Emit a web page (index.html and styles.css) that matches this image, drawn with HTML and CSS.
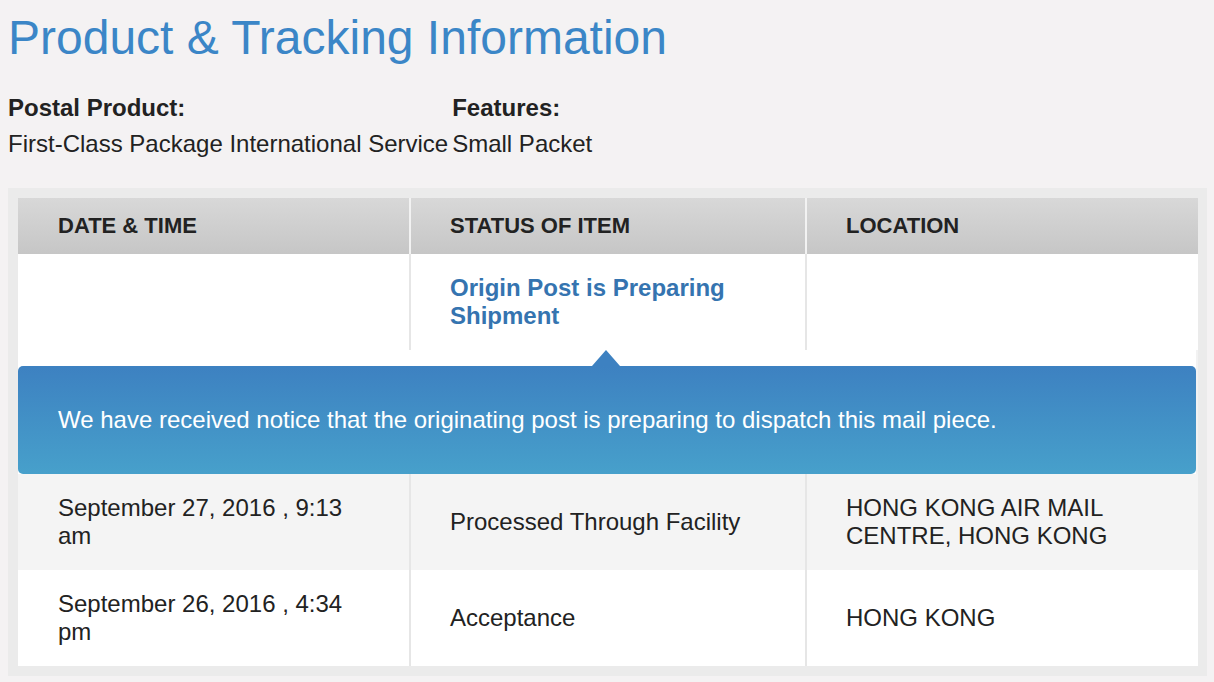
FILE: index.html
```html
<!DOCTYPE html>
<html lang="en">
<head>
<meta charset="utf-8">
<title>Product &amp; Tracking Information</title>
<link rel="stylesheet" href="styles.css">
</head>
<body>
<h1 class="title">Product &amp; Tracking Information</h1>
<div class="product">
  <div class="product-col">
    <div class="label">Postal Product:</div>
    <div class="value">First-Class Package International Service</div>
  </div>
  <div class="product-col">
    <div class="label">Features:</div>
    <div class="value">Small Packet</div>
  </div>
</div>
<div class="track-box">
  <div class="track-table">
    <div class="row row--head">
      <div class="cell">DATE &amp; TIME</div>
      <div class="cell">STATUS OF ITEM</div>
      <div class="cell">LOCATION</div>
    </div>
    <div class="row row--white">
      <div class="cell"></div>
      <div class="cell status-link">Origin Post is Preparing Shipment</div>
      <div class="cell"></div>
    </div>
    <div class="detail-row">
      <div class="detail">
        <span class="detail-arrow"></span>
        We have received notice that the originating post is preparing to dispatch this mail piece.
      </div>
    </div>
    <div class="row row--gray">
      <div class="cell">September 27, 2016 , 9:13 am</div>
      <div class="cell">Processed Through Facility</div>
      <div class="cell">HONG KONG AIR MAIL CENTRE, HONG KONG</div>
    </div>
    <div class="row row--white">
      <div class="cell">September 26, 2016 , 4:34 pm</div>
      <div class="cell">Acceptance</div>
      <div class="cell">HONG KONG</div>
    </div>
  </div>
</div>
</body>
</html>
```

FILE: styles.css
```css
html, body {
  margin: 0;
  padding: 0;
}
body {
  background: #f4f2f3;
  font-family: "Liberation Sans", Arial, Helvetica, sans-serif;
  color: #222;
  padding: 8px;
}
.title {
  margin: 0;
  font-weight: normal;
  font-size: 48px;
  line-height: 60px;
  color: #3b86c7;
}
.product {
  display: flex;
  gap: 4px;
  margin-top: 22px;
}
.product-col {
  display: flex;
  flex-direction: column;
}
.label {
  font-weight: bold;
  font-size: 24px;
  line-height: 36px;
}
.value {
  font-size: 24px;
  line-height: 36px;
  white-space: nowrap;
}
.track-box {
  margin-top: 26px;
  background: #ebebeb;
  padding: 10px 9px 10px 10px;
  width: 1199px;
  box-sizing: border-box;
}
.track-table {
  display: flex;
  flex-direction: column;
}
.row {
  display: grid;
  grid-template-columns: 391px 396px 393px;
}
.cell {
  padding: 0 40px;
  font-size: 24px;
  line-height: 28px;
  min-height: 96px;
  display: flex;
  align-items: center;
}
.row .cell + .cell {
  border-left: 2px solid #e6e6e6;
  padding-left: 39px;
}
.row--head {
  background: linear-gradient(#d8d8d8, #c6c6c6);
}
.row--head .cell {
  min-height: 56px;
  font-size: 22px;
  font-weight: bold;
  color: #222;
}
.row--head .cell + .cell {
  border-left-color: #f2f2f2;
}
.row--white {
  background: #fff;
}
.row--gray {
  background: #f4f4f4;
}
.status-link {
  color: #3574b0;
  font-weight: bold;
}
.detail-row {
  background: #fff;
  padding-top: 16px;
  padding-right: 2px;
  box-shadow: inset -2px 0 0 #f2f2f2;
}
.detail {
  position: relative;
  background: linear-gradient(#3d81c1, #47a0cb);
  border-radius: 5px;
  color: #fff;
  font-size: 24px;
  line-height: 28px;
  padding: 40px 40px;
}
.detail-arrow {
  position: absolute;
  left: 574px;
  top: -16px;
  width: 0;
  height: 0;
  border-left: 14px solid transparent;
  border-right: 14px solid transparent;
  border-bottom: 16px solid #3d81c1;
}
```
